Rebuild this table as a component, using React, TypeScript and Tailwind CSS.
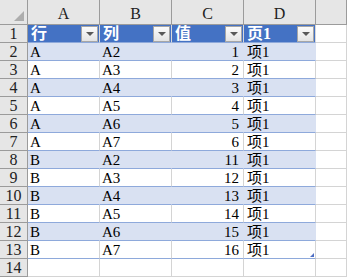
const COLS = ["A", "B", "C", "D"];
const HEAD = ["行", "列", "值", "页1"];

const ROWS: [string, string, number, string][] = [
  ["A", "A2", 1, "项1"],
  ["A", "A3", 2, "项1"],
  ["A", "A4", 3, "项1"],
  ["A", "A5", 4, "项1"],
  ["A", "A6", 5, "项1"],
  ["A", "A7", 6, "项1"],
  ["B", "A2", 11, "项1"],
  ["B", "A3", 12, "项1"],
  ["B", "A4", 13, "项1"],
  ["B", "A5", 14, "项1"],
  ["B", "A6", 15, "项1"],
  ["B", "A7", 16, "项1"],
];

const FONT = "[font-family:'Liberation_Serif','Noto_Sans_CJK_SC',serif]";

function FilterButton() {
  return (
    <div className="ml-auto mr-[1px] flex h-[16px] w-[17px] items-center justify-center border border-[#a6a6a6] bg-gradient-to-b from-[#fbfbfb] to-[#e4e4e4]">
      <div className="h-0 w-0 border-x-[4px] border-t-[4px] border-x-transparent border-t-[#595959]" />
    </div>
  );
}

export default function App() {
  return (
    <div className={`h-[278px] w-[347px] overflow-hidden bg-white text-[15px] text-black ${FONT}`}>
      <div className="grid grid-cols-[28px_72px_72px_72px_72px_1fr]">
        {/* column headers */}
        <div className="relative h-[25px] border-b border-r border-[#9b9b9b] bg-[#e6e6e6]">
          <div className="absolute bottom-[3px] right-[3px] h-0 w-0 border-b-[10px] border-l-[10px] border-b-[#adadad] border-l-transparent" />
        </div>
        {[...COLS, "E"].map((c) => (
          <div
            key={c}
            className="flex h-[25px] items-center justify-center border-b border-r border-[#9b9b9b] bg-[#e6e6e6] pt-[3px] text-[16px] text-[#222]"
          >
            {c === "E" ? "" : c}
          </div>
        ))}

        {/* row 1: table header */}
        <div className="flex h-[18px] items-center justify-center border-b border-r border-[#9b9b9b] bg-[#e6e6e6] pt-[1px] text-[16px] text-[#222]">
          1
        </div>
        {HEAD.map((h) => (
          <div
            key={h}
            className="flex h-[18px] items-center border-b border-r border-b-[#8ea9db] border-r-[#d9d9d9] bg-[#4472c4] pl-[3px] text-[16px] font-bold text-white"
          >
            <span className="leading-none">{h}</span>
            <FilterButton />
          </div>
        ))}
        <div className="h-[18px] border-b border-r border-[#d4d4d4]" />

        {ROWS.map((r, i) => {
          const band = i % 2 === 0;
          const cell = band
            ? "border-b border-r border-b-[#8ea9db] border-r-[#d9e1f2] bg-[#d9e1f2]"
            : "border-b border-r border-b-[#8ea9db] border-r-[#d4d4d4] bg-white";
          return [
            <div
              key={`h${i}`}
              className="flex h-[18px] items-center justify-center border-b border-r border-[#9b9b9b] bg-[#e6e6e6] pt-[1px] text-[16px] text-[#222]"
            >
              {i + 2}
            </div>,
            <div key={`a${i}`} className={`flex h-[18px] items-center pl-[2px] pt-[2px] ${cell}`}>
              {r[0]}
            </div>,
            <div key={`b${i}`} className={`flex h-[18px] items-center pl-[2px] pt-[2px] ${cell}`}>
              {r[1]}
            </div>,
            <div key={`c${i}`} className={`flex h-[18px] items-center justify-end pr-[4px] pt-[2px] ${cell}`}>
              {r[2]}
            </div>,
            <div
              key={`d${i}`}
              className={`relative flex h-[18px] items-center pl-[3px] pt-[2px] ${cell} border-r-[#8ea9db]`}
            >
              {r[3]}
              {i === ROWS.length - 1 && (
                <div className="absolute bottom-[1px] right-[1px] h-0 w-0 border-b-[4px] border-l-[4px] border-b-[#4f6fc4] border-l-transparent" />
              )}
            </div>,
            <div key={`e${i}`} className="h-[18px] border-b border-r border-[#d4d4d4]" />,
          ];
        })}

        {/* row 14 */}
        <div className="flex h-[18px] items-center justify-center border-b border-r border-[#9b9b9b] bg-[#e6e6e6] pt-[1px] text-[16px] text-[#222]">
          14
        </div>
        {[0, 1, 2, 3, 4].map((k) => (
          <div key={k} className="h-[18px] border-b border-r border-[#d4d4d4]" />
        ))}
      </div>
    </div>
  );
}
